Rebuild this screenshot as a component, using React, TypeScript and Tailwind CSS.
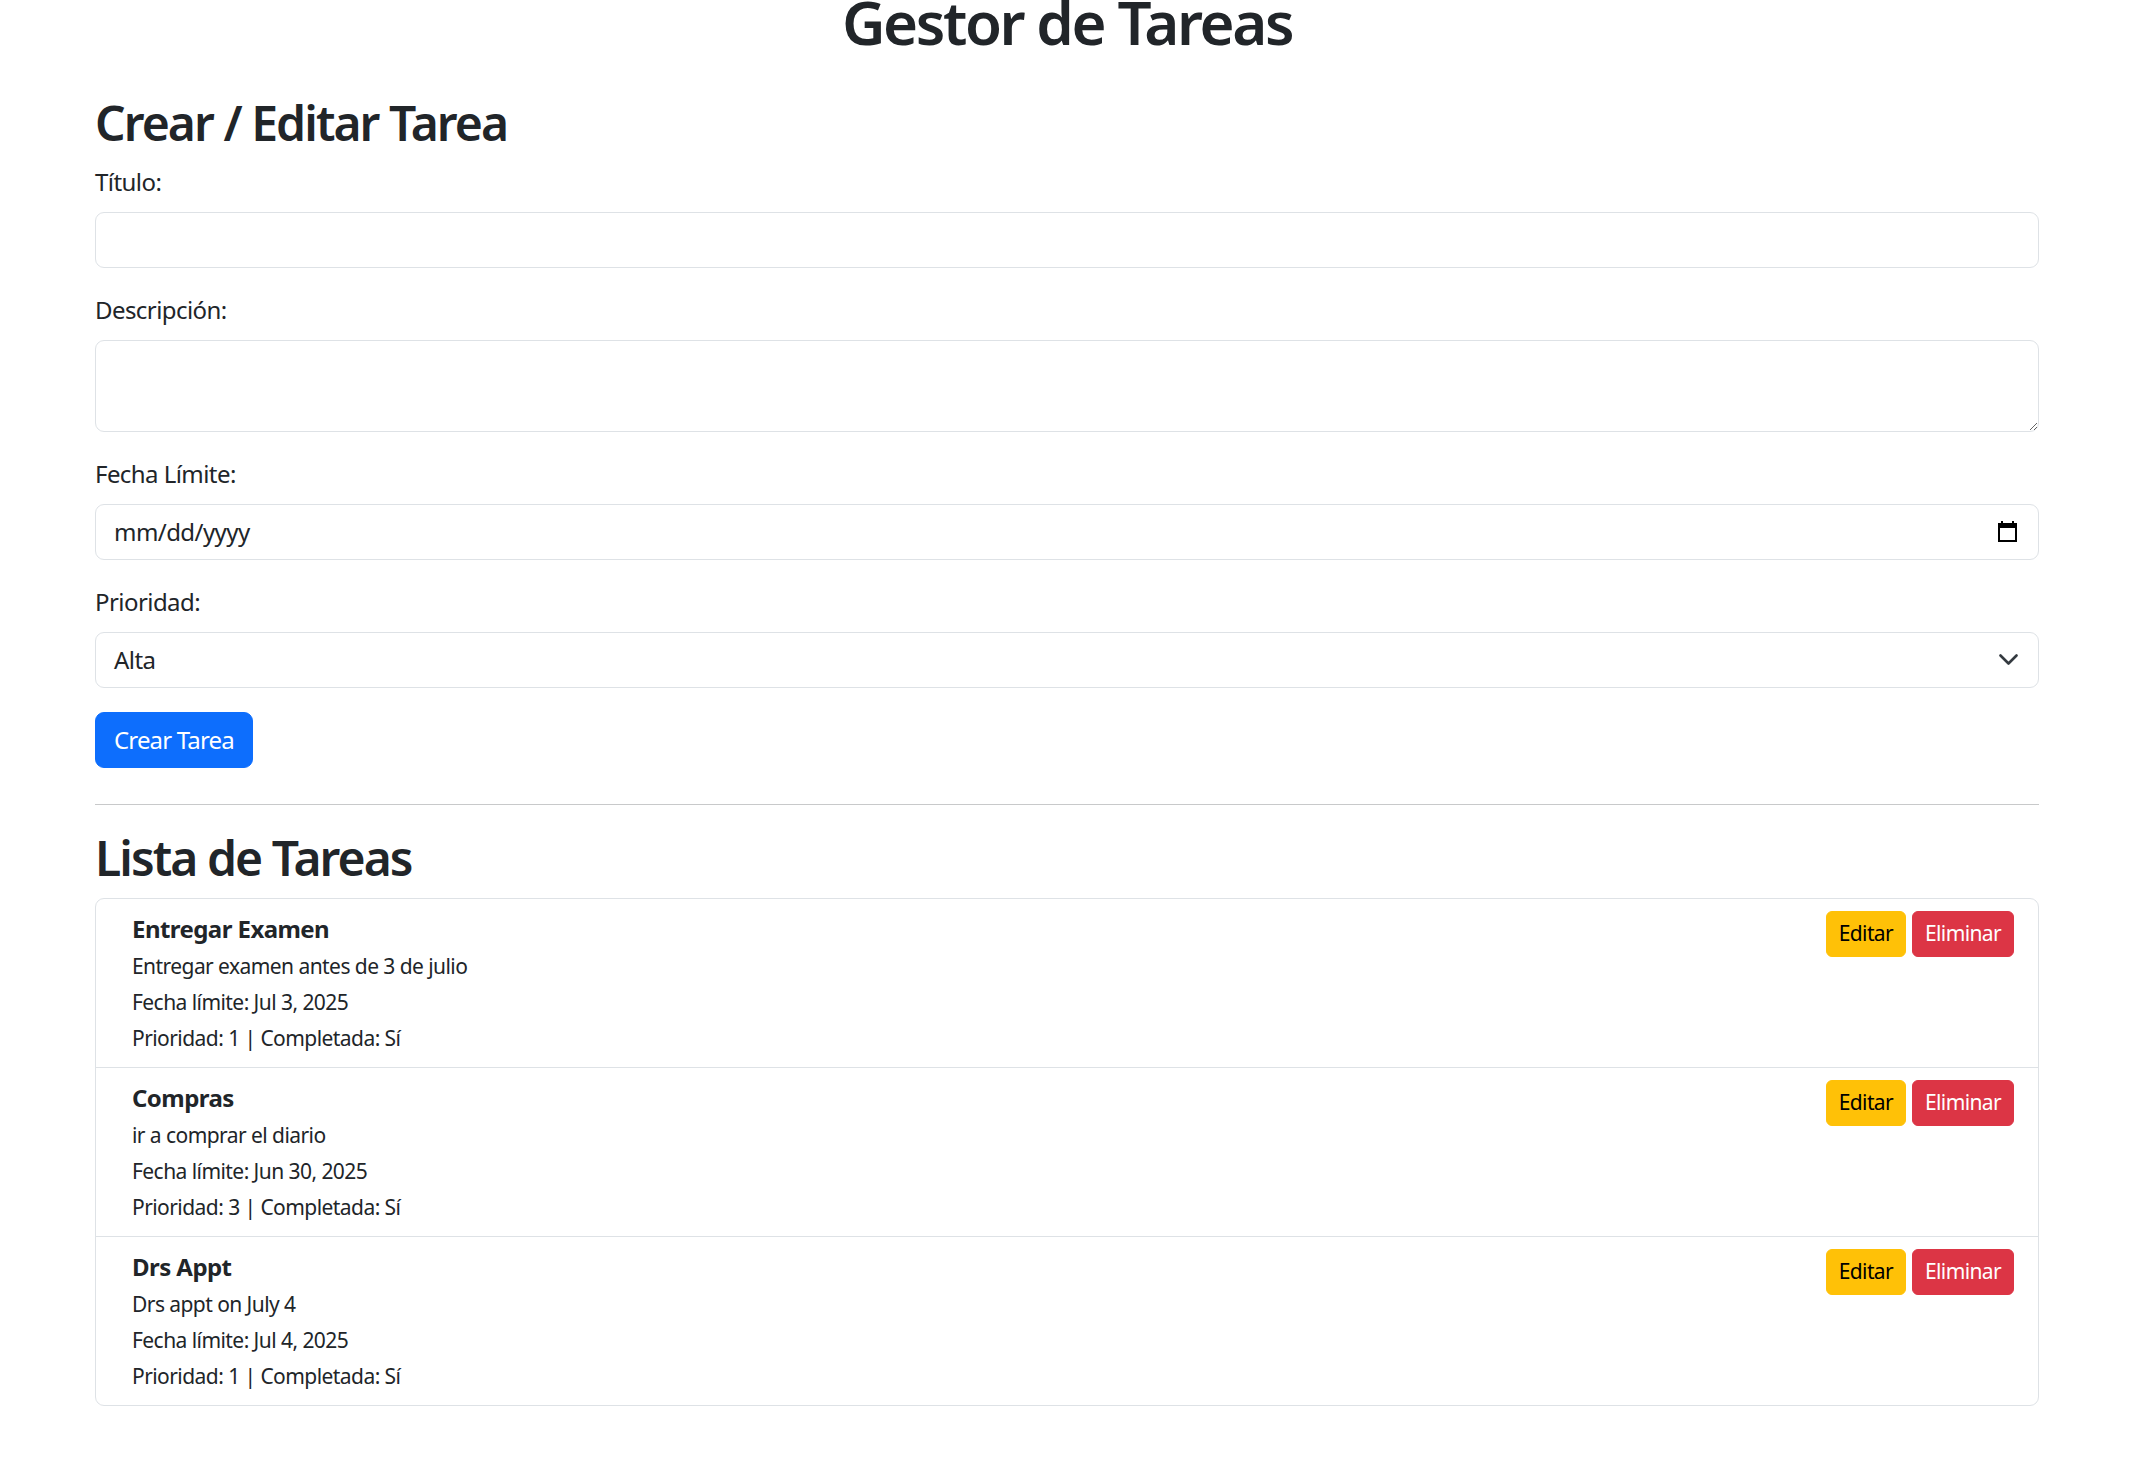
import React from "react";

const tasks = [
  {
    title: "Entregar Examen",
    desc: "Entregar examen antes de 3 de julio",
    date: "Jul 3, 2025",
    prio: 1,
  },
  {
    title: "Compras",
    desc: "ir a comprar el diario",
    date: "Jun 30, 2025",
    prio: 3,
  },
  {
    title: "Drs Appt",
    desc: "Drs appt on July 4",
    date: "Jul 4, 2025",
    prio: 1,
  },
];

function CalendarIcon() {
  return (
    <svg width="19" height="21" viewBox="0 0 19 21" aria-hidden="true">
      <rect x="3" y="0" width="2" height="3" fill="#000" />
      <rect x="14" y="0" width="2" height="3" fill="#000" />
      <rect x="0" y="2" width="19" height="5" fill="#000" />
      <rect x="1" y="3" width="17" height="17" fill="none" stroke="#000" strokeWidth="2" />
    </svg>
  );
}

function Chevron() {
  return (
    <svg width="19" height="12" viewBox="0 0 19 12" aria-hidden="true">
      <polyline
        points="1.5,1.5 9.5,9.5 17.5,1.5"
        fill="none"
        stroke="#343a40"
        strokeWidth="2.6"
        strokeLinecap="round"
        strokeLinejoin="round"
      />
    </svg>
  );
}

export default function App() {
  return (
    <div
      className="min-h-screen overflow-hidden bg-white tracking-[-0.035em] text-[#212529]"
      style={{ fontFamily: '"Segoe UI", "Noto Sans", "Open Sans", sans-serif' }}
    >
      <div className="mx-auto w-[1980px] px-[18px]">
        <h1 className="mt-[-14px] mb-[36px] text-center text-[60px] leading-[72px] font-semibold tracking-[-0.04em]">
          Gestor de Tareas
        </h1>

        <h2 className="mb-[12px] text-[48px] leading-[57.6px] font-semibold tracking-[-0.04em]">
          Crear / Editar Tarea
        </h2>

        <form className="mb-[36px]" onSubmit={(e) => e.preventDefault()}>
          <div className="mb-[24px]">
            <label className="mb-[12px] block text-[24px] leading-[36px]">Título:</label>
            <input
              type="text"
              className="block h-[56px] w-full rounded-[9px] border-[1.5px] border-[#dee2e6] bg-white px-[18px] text-[24px] outline-none"
            />
          </div>

          <div className="mb-[24px]">
            <label className="mb-[12px] block text-[24px] leading-[36px]">Descripción:</label>
            <textarea
              rows={2}
              className="block h-[92px] w-full rounded-[9px] border-[1.5px] border-[#dee2e6] bg-white px-[18px] py-[9px] text-[24px] leading-[36px] outline-none"
            />
          </div>

          <div className="mb-[24px]">
            <label className="mb-[12px] block text-[24px] leading-[36px]">Fecha Límite:</label>
            <div className="flex h-[56px] w-full items-center justify-between rounded-[9px] border-[1.5px] border-[#dee2e6] bg-white pl-[18px] pr-[21px] text-[24px] leading-[36px]">
              <span>mm/dd/yyyy</span>
              <CalendarIcon />
            </div>
          </div>

          <div className="mb-[24px]">
            <label className="mb-[12px] block text-[24px] leading-[36px]">Prioridad:</label>
            <div className="flex h-[56px] w-full items-center justify-between rounded-[9px] border-[1.5px] border-[#dee2e6] bg-white pl-[18px] pr-[20px] text-[24px] leading-[36px]">
              <span>Alta</span>
              <Chevron />
            </div>
          </div>

          <button
            type="submit"
            className="h-[56px] rounded-[9px] border-[1.5px] border-[#0d6efd] bg-[#0d6efd] px-[18px] text-[24px] leading-[36px] tracking-[-0.035em] text-white"
          >
            Crear Tarea
          </button>
        </form>

        <hr className="mb-[24px] border-t-[1.5px] border-[#c8c9ca]" />

        <h2 className="mb-[12px] text-[48px] leading-[57.6px] font-semibold tracking-[-0.04em]">
          Lista de Tareas
        </h2>

        <div className="overflow-hidden rounded-[9px] border-[1.5px] border-[#dee2e6]">
          {tasks.map((t, i) => (
            <div
              key={i}
              className={
                "flex items-start justify-between px-[24px] py-[12px] " +
                (i > 0 ? "border-t-[1.5px] border-[#dee2e6]" : "")
              }
            >
              <div className="ml-[12px] mr-auto text-[24px] leading-[36px]">
                <div className="font-bold">{t.title}</div>
                <div>
                  <span className="text-[21px] leading-[24px]">{t.desc}</span>
                </div>
                <div>
                  <span className="text-[21px] leading-[24px]">Fecha límite: {t.date}</span>
                </div>
                <div>
                  <span className="text-[21px] leading-[24px]">
                    Prioridad: {t.prio} | Completada: Sí
                  </span>
                </div>
              </div>
              <div className="flex gap-[6px]">
                <button className="h-[46px] rounded-[6px] border-[1.5px] border-[#ffc107] bg-[#ffc107] px-[12px] text-[21px] leading-[31.5px] tracking-[-0.03em] text-black">
                  Editar
                </button>
                <button className="h-[46px] rounded-[6px] border-[1.5px] border-[#dc3545] bg-[#dc3545] px-[12px] text-[21px] leading-[31.5px] tracking-[-0.03em] text-white">
                  Eliminar
                </button>
              </div>
            </div>
          ))}
        </div>
      </div>
    </div>
  );
}
